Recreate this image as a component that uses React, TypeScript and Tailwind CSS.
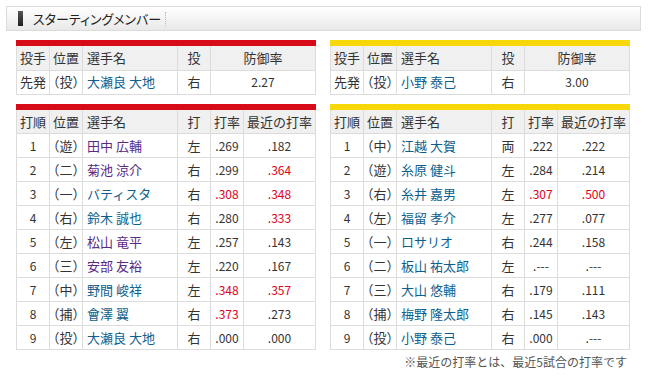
type Batter = {
  order: number;
  pos: string;
  name: string;
  hand: string;
  avg: string;
  recent: string;
  avgHot?: boolean;
  recentHot?: boolean;
  visited?: boolean;
};

const carp: Batter[] = [
  { order: 1, pos: "遊", name: "田中 広輔", hand: "左", avg: ".269", recent: ".182", visited: true },
  { order: 2, pos: "二", name: "菊池 涼介", hand: "右", avg: ".299", recent: ".364", recentHot: true, visited: true },
  { order: 3, pos: "一", name: "バティスタ", hand: "右", avg: ".308", recent: ".348", avgHot: true, recentHot: true },
  { order: 4, pos: "右", name: "鈴木 誠也", hand: "右", avg: ".280", recent: ".333", recentHot: true },
  { order: 5, pos: "左", name: "松山 竜平", hand: "左", avg: ".257", recent: ".143", visited: true },
  { order: 6, pos: "三", name: "安部 友裕", hand: "左", avg: ".220", recent: ".167", visited: true },
  { order: 7, pos: "中", name: "野間 峻祥", hand: "左", avg: ".348", recent: ".357", avgHot: true, recentHot: true },
  { order: 8, pos: "捕", name: "會澤 翼", hand: "右", avg: ".373", recent: ".273", avgHot: true },
  { order: 9, pos: "投", name: "大瀬良 大地", hand: "右", avg: ".000", recent: ".000" },
];

const tigers: Batter[] = [
  { order: 1, pos: "中", name: "江越 大賀", hand: "両", avg: ".222", recent: ".222" },
  { order: 2, pos: "遊", name: "糸原 健斗", hand: "左", avg: ".284", recent: ".214" },
  { order: 3, pos: "右", name: "糸井 嘉男", hand: "左", avg: ".307", recent: ".500", avgHot: true, recentHot: true },
  { order: 4, pos: "左", name: "福留 孝介", hand: "左", avg: ".277", recent: ".077" },
  { order: 5, pos: "一", name: "ロサリオ", hand: "右", avg: ".244", recent: ".158" },
  { order: 6, pos: "二", name: "板山 祐太郎", hand: "左", avg: ".---", recent: ".---" },
  { order: 7, pos: "三", name: "大山 悠輔", hand: "右", avg: ".179", recent: ".111" },
  { order: 8, pos: "捕", name: "梅野 隆太郎", hand: "右", avg: ".145", recent: ".143" },
  { order: 9, pos: "投", name: "小野 泰己", hand: "右", avg: ".000", recent: ".---" },
];

const th = "h-[24px] border border-[#dcdcdc] bg-[#f0f0f0] font-normal p-0";
const td = "h-[24px] border border-[#dcdcdc] p-0";
// position cells: full-width parens squeezed to half width
const posCell = `${td} text-center [font-feature-settings:'halt']`;

function PitcherTable({ bar, name, era }: { bar: string; name: string; era: string }) {
  return (
    <div className="w-[300px]">
      <div className={`h-[6px] ${bar}`} />
      <table className="w-[300px] table-fixed border-collapse text-[13px] text-[#333]">
        <colgroup>
          <col className="w-[33px]" />
          <col className="w-[33px]" />
          <col className="w-[95px]" />
          <col className="w-[33px]" />
          <col />
        </colgroup>
        <thead>
          <tr>
            <th className={`${th} border-t-0 text-center`}>投手</th>
            <th className={`${th} border-t-0 text-center`}>位置</th>
            <th className={`${th} border-t-0 text-left pl-[4px]`}>選手名</th>
            <th className={`${th} border-t-0 text-center`}>投</th>
            <th className={`${th} border-t-0 text-center`}>防御率</th>
          </tr>
        </thead>
        <tbody>
          <tr>
            <td className={`${td} text-center`}>先発</td>
            <td className={posCell}>（投）</td>
            <td className={`${td} pl-[4px] text-[#0e5f8e]`}>{name}</td>
            <td className={`${td} text-center`}>右</td>
            <td className={`${td} text-center text-[12px]`}>{era}</td>
          </tr>
        </tbody>
      </table>
    </div>
  );
}

function BattingTable({ bar, rows }: { bar: string; rows: Batter[] }) {
  return (
    <div className="w-[300px]">
      <div className={`h-[6px] ${bar}`} />
      <table className="w-[300px] table-fixed border-collapse text-[13px] text-[#333]">
        <colgroup>
          <col className="w-[33px]" />
          <col className="w-[33px]" />
          <col className="w-[95px]" />
          <col className="w-[33px]" />
          <col className="w-[33px]" />
          <col />
        </colgroup>
        <thead>
          <tr>
            <th className={`${th} border-t-0 text-center`}>打順</th>
            <th className={`${th} border-t-0 text-center`}>位置</th>
            <th className={`${th} border-t-0 text-left pl-[4px]`}>選手名</th>
            <th className={`${th} border-t-0 text-center`}>打</th>
            <th className={`${th} border-t-0 text-center`}>打率</th>
            <th className={`${th} border-t-0 text-center`}>最近の打率</th>
          </tr>
        </thead>
        <tbody>
          {rows.map((r) => (
            <tr key={r.order}>
              <td className={`${td} text-center text-[12px]`}>{r.order}</td>
              <td className={posCell}>（{r.pos}）</td>
              <td className={`${td} pl-[4px] ${r.visited ? "text-[#5a2a84]" : "text-[#0e5f8e]"}`}>{r.name}</td>
              <td className={`${td} text-center`}>{r.hand}</td>
              <td className={`${td} text-center text-[12px] ${r.avgHot ? "text-[#e0001b]" : ""}`}>{r.avg}</td>
              <td className={`${td} text-center text-[12px] ${r.recentHot ? "text-[#e0001b]" : ""}`}>{r.recent}</td>
            </tr>
          ))}
        </tbody>
      </table>
    </div>
  );
}

export default function App() {
  return (
    <div className="w-[648px] h-[386px] bg-white pt-[6px] font-['Noto_Sans_CJK_JP',sans-serif]">
      {/* section title */}
      <div className="mx-[6px] h-[25px] w-[635px] flex items-center border border-[#dcdcdc] bg-gradient-to-b from-white to-[#e9e9e9]">
        <div className="ml-[11px] h-[15px] w-[5px] bg-gradient-to-b from-[#555] to-[#222]" />
        <span className="ml-[10px] text-[13px] text-[#222] [font-feature-settings:'palt']">スターティングメンバー</span>
        <span className="ml-[4px] h-[14px] border-l border-dotted border-[#bbb]" />
      </div>

      <div className="mt-[9px] pl-[16px] flex gap-[14px]">
        <PitcherTable bar="bg-[#d80c18]" name="大瀬良 大地" era="2.27" />
        <PitcherTable bar="bg-[#f7d708]" name="小野 泰己" era="3.00" />
      </div>

      <div className="mt-[9px] pl-[16px] flex gap-[14px]">
        <BattingTable bar="bg-[#d80c18]" rows={carp} />
        <BattingTable bar="bg-[#f7d708]" rows={tigers} />
      </div>

      <div className="mt-[3px] w-[627px] text-right text-[12px] text-[#555]">
        ※最近の打率とは、最近5試合の打率です
      </div>
    </div>
  );
}
